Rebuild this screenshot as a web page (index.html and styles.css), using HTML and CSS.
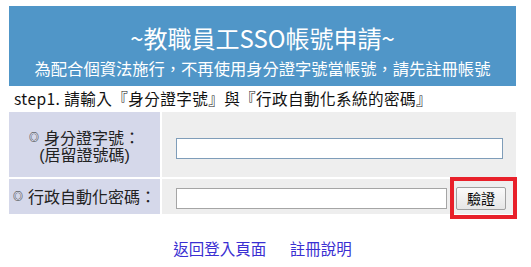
FILE: index.html
```html
<!DOCTYPE html>
<html lang="zh-Hant">
<head>
    <meta charset="UTF-8">
    <meta name="viewport" content="width=device-width, initial-scale=1.0">
    <title>教職員工SSO帳號申請</title>
    <link rel="stylesheet" href="styles.css">
</head>
<body>
    <div class="page">
        <div class="header">
            <h2 class="title">~教職員工SSO帳號申請~</h2>
            <p class="subtitle">為配合個資法施行，不再使用身分證字號當帳號，請先註冊帳號</p>
        </div>
        <p class="step">step1. 請輸入『身分證字號』與『行政自動化系統的密碼』</p>
        <form class="form-table" action="#">
            <div class="label-cell tall">
                <div><span class="mark">◎</span>身分證字號：</div>
                <div>(居留證號碼)</div>
            </div>
            <div class="input-cell tall">
                <input type="text" class="id-input" name="idno">
            </div>
            <div class="label-cell"><div><span class="mark">◎</span>行政自動化密碼：</div></div>
            <div class="input-cell">
                <input type="password" class="pw-input" name="pw">
                <span class="btn-wrap">
                    <button type="button" class="verify-btn">驗證</button>
                    <span class="highlight"></span>
                </span>
            </div>
        </form>
        <div class="links">
            <a href="#" class="back-link">返回登入頁面</a>
            <a href="#">註冊說明</a>
        </div>
    </div>
</body>
</html>
```

FILE: styles.css
```css
body {
    margin: 0;
    padding: 0;
    font-family: "Noto Sans CJK TC", "Noto Sans", sans-serif;
    background: #fff;
    color: #222;
}
.page {
    width: 507px;
    margin: 6px 0 0 9px;
}
.header {
    background-color: #5096c8;
    color: white;
    text-align: center;
    height: 80px;
    padding-top: 17px;
    box-sizing: border-box;
}
.title {
    margin: 0;
    font-size: 24px;
    font-weight: normal;
    line-height: 30px;
}
.subtitle {
    margin: 5px 0 0;
    font-size: 16.3px;
    line-height: 20px;
}
.step {
    margin: 0;
    padding-left: 5px;
    font-size: 15.6px;
    letter-spacing: 0.4px;
    line-height: 24px;
    color: #111;
}
.form-table {
    display: grid;
    grid-template-columns: 151px 1fr;
    grid-template-rows: 65px 35px;
    gap: 2px;
    margin-top: 2px;
}
.label-cell {
    background-color: #d5d8ea;
    display: flex;
    flex-direction: column;
    align-items: center;
    justify-content: center;
    text-align: center;
    font-family: "Liberation Sans", "Noto Sans CJK TC", sans-serif;
    font-size: 16px;
    line-height: 17px;
    color: #222;
}
.label-cell.tall {
    padding-top: 4px;
}
.mark {
    font-size: 10px;
    font-weight: bold;
    color: #333;
    vertical-align: 3px;
    margin-right: 5px;
}
.input-cell {
    background-color: #eeeeee;
    display: flex;
    align-items: center;
    padding-left: 14px;
}
.input-cell.tall {
    padding-top: 7px;
}
.input-cell input {
    height: 21px;
    box-sizing: border-box;
    margin: 0;
    padding: 1px 3px;
    background: #fff;
    font-size: 13px;
}
.id-input {
    width: 327px;
    border: 1px solid #7f9db9;
}
.pw-input {
    width: 271px;
    border: 1px solid #a5a5a5;
    margin-top: 3px !important;
}
.btn-wrap {
    position: relative;
    margin-left: 9px;
    display: inline-block;
}
.verify-btn {
    width: 50px;
    height: 23px;
    margin-top: 3px;
    border: 1px solid #a0a0a0;
    border-radius: 2px;
    background: linear-gradient(#fafafa, #e6e6e6);
    font-family: "Noto Sans CJK TC", sans-serif;
    font-size: 14px;
    line-height: 18px;
    padding: 0;
    color: #000;
}
.highlight {
    position: absolute;
    left: -6px;
    top: -7px;
    width: 67px;
    height: 42px;
    box-sizing: border-box;
    border: 4px solid #e8202a;
}
.links {
    text-align: center;
    margin-top: 23px;
    font-size: 15.5px;
}
.links a {
    color: #3a2fd2;
    text-decoration: none;
    margin: 0 10px;
}
.back-link {
    color: #4d2ccb;
}
```
